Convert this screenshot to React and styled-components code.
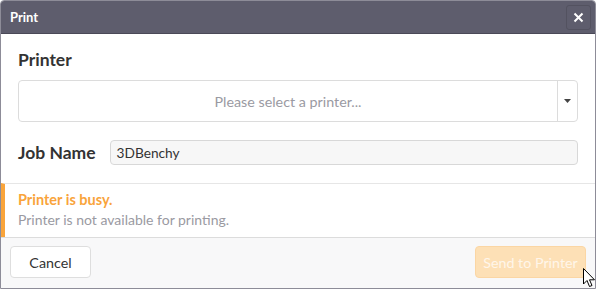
import React from "react";
import styled, { createGlobalStyle } from "styled-components";

const Global = createGlobalStyle`
  html, body { margin: 0; padding: 0; background: #ffffff; }
  body { font-family: Lato, "Open Sans", sans-serif; }
  * { box-sizing: border-box; }
`;

const Dialog = styled.div`
  position: relative;
  width: 596px;
  height: 289px;
  display: flex;
  flex-direction: column;
  border: 1px solid #8d8c98;
  border-radius: 4px 4px 0 0;
  overflow: hidden;
  background: #fff;
`;

const Header = styled.div`
  height: 33px;
  flex: none;
  background: #5e5d6d;
  border-bottom: 1px solid #4a4957;
  display: flex;
  align-items: center;
  justify-content: space-between;
  padding: 0 4px 0 9px;
`;

const Title = styled.div`
  color: #fff;
  font-weight: 700;
  font-size: 13px;
`;

const CloseButton = styled.button`
  width: 25px;
  height: 25px;
  border: 1px solid #535260;
  border-radius: 3px;
  background: #5e5d6d;
  display: flex;
  align-items: center;
  justify-content: center;
  padding: 0;
`;

const Body = styled.div`
  padding: 16px 17px 18px 17px;
  display: flex;
  flex-direction: column;
`;

const Label = styled.div`
  font-weight: 700;
  font-size: 17.5px;
  color: #333;
  line-height: 20px;
`;

const Select = styled.div`
  margin-top: 10px;
  height: 42px;
  border: 1px solid #dcdcdc;
  border-radius: 4px;
  display: flex;
  align-items: stretch;
`;

const SelectText = styled.div`
  flex: 1;
  display: flex;
  align-items: center;
  justify-content: center;
  font-size: 14.3px;
  color: #9a9aa2;
`;

const Caret = styled.div`
  width: 20px;
  border-left: 1px solid #dcdcdc;
  display: flex;
  align-items: center;
  justify-content: center;
`;

const JobRow = styled.div`
  margin-top: 18px;
  display: flex;
  align-items: center;
  gap: 14px;
`;

const JobInput = styled.div`
  flex: 1;
  height: 25px;
  background: #f7f7f7;
  border: 1px solid #d8d8d8;
  border-radius: 4px;
  font-size: 13.7px;
  color: #333;
  display: flex;
  align-items: center;
  padding-left: 6px;
`;

const Alert = styled.div`
  border-top: 1px solid #e6e6e6;
  border-left: 4px solid #f9a43b;
  padding: 7px 0 0 13px;
  height: 54px;
`;

const AlertTitle = styled.div`
  color: #f9a43b;
  font-weight: 700;
  font-size: 14.5px;
  line-height: 18px;
`;

const AlertText = styled.div`
  color: #9a9aa2;
  font-size: 14px;
  line-height: 21px;
`;

const Footer = styled.div`
  flex: 1;
  border-top: 1px solid #dcdcdc;
  background: #f8f8f9;
  display: flex;
  justify-content: space-between;
  align-items: flex-start;
  padding: 8px 9px 0 9px;
`;

const Button = styled.button`
  height: 32px;
  border-radius: 4px;
  font-family: inherit;
  font-size: 14.3px;
  padding: 0;
  width: ${(p) => (p.$primary ? "111px" : "81px")};
  border: 1px solid ${(p) => (p.$primary ? "#fbd6a4" : "#dedede")};
  background: ${(p) => (p.$primary ? "#fde0b6" : "#fff")};
  color: ${(p) => (p.$primary ? "#fff6ea" : "#333")};
`;

const Cursor = styled.svg`
  position: absolute;
  left: 582px;
  top: 267px;
`;

export default function App() {
  return (
    <>
      <Global />
      <Dialog>
        <Header>
          <Title>Print</Title>
          <CloseButton>
            <svg width="11" height="11" viewBox="0 0 11 11">
              <path d="M1.5 1.5 L9.5 9.5 M9.5 1.5 L1.5 9.5" stroke="#fff" strokeWidth="2" />
            </svg>
          </CloseButton>
        </Header>
        <Body>
          <Label>Printer</Label>
          <Select>
            <SelectText>Please select a printer...</SelectText>
            <Caret>
              <svg width="7" height="4" viewBox="0 0 7 4">
                <path d="M0 0 H7 L3.5 4 Z" fill="#444" />
              </svg>
            </Caret>
          </Select>
          <JobRow>
            <Label>Job Name</Label>
            <JobInput>3DBenchy</JobInput>
          </JobRow>
        </Body>
        <Alert>
          <AlertTitle>Printer is busy.</AlertTitle>
          <AlertText>Printer is not available for printing.</AlertText>
        </Alert>
        <Footer>
          <Button>Cancel</Button>
          <Button $primary>Send to Printer</Button>
        </Footer>
        <Cursor width="13" height="20" viewBox="0 0 13 20">
          <path d="M0.5 0.5 L0.5 16 L4 12.5 L6.5 18.5 L9 17.5 L6.5 11.8 L11.5 11.8 Z" fill="#fff" stroke="#000" strokeWidth="1" />
        </Cursor>
      </Dialog>
    </>
  );
}
